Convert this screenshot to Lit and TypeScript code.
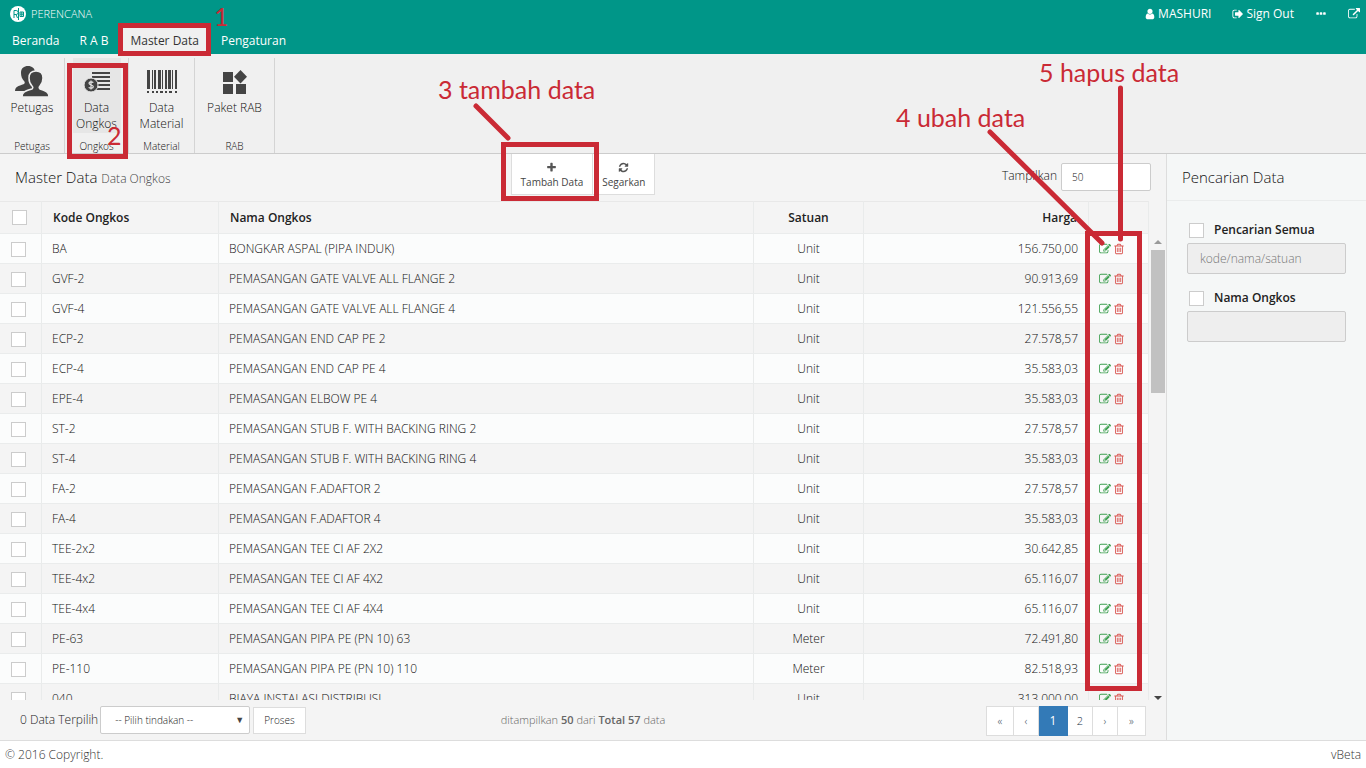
import { LitElement, html, css, svg } from "lit";
import { customElement } from "lit/decorators.js";

const FA: Record<string, string> = {
  trash: "M704 736v576q0 14-9 23t-23 9h-64q-14 0-23-9t-9-23v-576q0-14 9-23t23-9h64q14 0 23 9t9 23zm256 0v576q0 14-9 23t-23 9h-64q-14 0-23-9t-9-23v-576q0-14 9-23t23-9h64q14 0 23 9t9 23zm256 0v576q0 14-9 23t-23 9h-64q-14 0-23-9t-9-23v-576q0-14 9-23t23-9h64q14 0 23 9t9 23zm128 724v-948h-896v948q0 22 7 40.5t14.5 27 10.5 8.5h832q3 0 10.5-8.5t14.5-27 7-40.5zm-672-1076h448l-48-117q-7-9-17-11h-317q-10 2-17 11zm928 32v64q0 14-9 23t-23 9h-96v948q0 83-47 143.5t-113 60.5h-832q-66 0-113-58.5t-47-141.5v-952h-96q-14 0-23-9t-9-23v-64q0-14 9-23t23-9h309l70-167q15-37 54-63t79-26h320q40 0 79 26t54 63l70 167h309q14 0 23 9t9 23z",
  plus: "M1600 736v192q0 40-28 68t-68 28h-416v416q0 40-28 68t-68 28h-192q-40 0-68-28t-28-68v-416h-416q-40 0-68-28t-28-68v-192q0-40 28-68t68-28h416v-416q0-40 28-68t68-28h192q40 0 68 28t28 68v416h416q40 0 68 28t28 68z",
  refresh: "M1639 1056q0 5-1 7-64 268-268 434.5t-478 166.5q-146 0-282.5-55t-243.5-157l-129 129q-19 19-45 19t-45-19-19-45v-448q0-26 19-45t45-19h448q26 0 45 19t19 45-19 45l-137 137q71 66 161 102t187 36q134 0 250-65t186-179q11-17 53-117 8-23 30-23h192q13 0 22.5 9.5t9.5 22.5zm25-800v448q0 26-19 45t-45 19h-448q-26 0-45-19t-19-45 19-45l138-138q-148-137-349-137-134 0-250 65t-186 179q-11 17-53 117-8 23-30 23h-199q-13 0-22.5-9.5t-9.5-22.5v-7q65-268 270-434.5t480-166.5q146 0 284 55.5t245 156.5l130-129q19-19 45-19t45 19 19 45z",
  edit: "M888 1184l116-116-152-152-116 116v56h96v96h56zm440-720q-16-16-33 1l-350 350q-17 17-1 33t33-1l350-350q17-17 1-33zm80 594v190q0 119-84.5 203.5t-203.5 84.5h-832q-119 0-203.5-84.5t-84.5-203.5v-832q0-119 84.5-203.5t203.5-84.5h832q63 0 117 25 15 7 18 23 3 17-9 29l-49 49q-14 14-32 8-23-6-45-6h-832q-66 0-113 47t-47 113v832q0 66 47 113t113 47h832q66 0 113-47t47-113v-126q0-13 9-22l64-64q15-15 35-7t20 29zm-96-738l288 288-672 672h-288v-288zm444 132l-92 92-288-288 92-92q28-28 68-28t68 28l152 152q28 28 28 68t-28 68z",
  user: "M1536 1399q0 109-62.5 187t-150.5 78h-854q-88 0-150.5-78t-62.5-187q0-85 8.5-160.5t31.5-152 58.5-131 94-89 134.5-34.5q131 128 313 128t313-128q76 0 134.5 34.5t94 89 58.5 131 31.5 152 8.5 160.5zm-256-887q0 159-112.5 271.5t-271.5 112.5-271.5-112.5-112.5-271.5 112.5-271.5 271.5-112.5 271.5 112.5 112.5 271.5z",
  signout: "M704 1440q0 4 1 20t.5 26.5-3 23.5-10 19.5-20.5 6.5h-320q-119 0-203.5-84.5t-84.5-203.5v-704q0-119 84.5-203.5t203.5-84.5h320q13 0 22.5 9.5t9.5 22.5q0 4 1 20t.5 26.5-3 23.5-10 19.5-20.5 6.5h-320q-66 0-113 47t-47 113v704q0 66 47 113t113 47h312l11.5 1 11.5 3 8 5.5 7 9 2 13.5zm928-544q0 26-19 45l-544 544q-19 19-45 19t-45-19-19-45v-288h-448q-26 0-45-19t-19-45v-384q0-26 19-45t45-19h448v-288q0-26 19-45t45-19 45 19l544 544q19 19 19 45z",
  dots: "M576 736v192q0 40-28 68t-68 28h-192q-40 0-68-28t-28-68v-192q0-40 28-68t68-28h192q40 0 68 28t28 68zm512 0v192q0 40-28 68t-68 28h-192q-40 0-68-28t-28-68v-192q0-40 28-68t68-28h192q40 0 68 28t28 68zm512 0v192q0 40-28 68t-68 28h-192q-40 0-68-28t-28-68v-192q0-40 28-68t68-28h192q40 0 68 28t28 68z",
  external: "M1408 928v320q0 119-84.5 203.5t-203.5 84.5h-832q-119 0-203.5-84.5t-84.5-203.5v-832q0-119 84.5-203.5t203.5-84.5h704q14 0 23 9t9 23v64q0 14-9 23t-23 9h-704q-66 0-113 47t-47 113v832q0 66 47 113t113 47h832q66 0 113-47t47-113v-320q0-14 9-23t23-9h64q14 0 23 9t9 23zm384-864v512q0 26-19 45t-45 19-45-19l-176-176-652 652q-10 10-23 10t-23-10l-114-114q-10-10-10-23t10-23l652-652-176-176q-19-19-19-45t19-45 45-19h512q26 0 45 19t19 45z",
};
const fa = (n: string) => html`<svg class="fa" viewBox="0 0 1792 1792" aria-hidden="true"><path d=${FA[n]} /></svg>`;

const people = svg`
  <path d="M0 25c0-4 3-5 9-7 1-1 1-2 0-3-2-2-3-5-3-8 0-5 3-7 7-7s7 2 7 7c0 3-1 6-3 8v3l3 7z"/>
  <path stroke="#f0f0f0" stroke-width="1.500" d="M7 31c0-5 3-6 10-8 1-1 1-2 0-3-2-2-3-5-3-8 0-5 3-7 7-7s7 2 7 7c0 3-1 6-3 8-1 1-1 2 0 3 6 2 9 3 9 8z"/>`;
const money = svg`
  <path d="M8 0h18v2h-18zM8 4h18v2h-18zM10 8h16v2h-16zM12 12h14v2h-14zM10 16h16v2h-16z"/><circle cx="7" cy="13" r="7" stroke="#e6e6e6" stroke-width="1"/>
  <path d="M9.300 10.700c-1-1.300-4.300-1.200-4.300.6 0 2 4.300 1.400 4.300 3.400 0 1.800-3.300 1.900-4.600.6M7 8.500v9" fill="none" stroke="#e6e6e6" stroke-width="1.200"/>`;
const barcode = svg`
  <path d="M0 0h3v19h-3zM5 0h1v19h-1zM7 0h2v19h-2zM11 0h3v19h-3zM15 0h1v19h-1zM18 0h2v19h-2zM21 0h3v19h-3zM25 0h1v19h-1zM28 0h2v19h-2z"/>
  <path d="M0 21h2v2h-2zM5 21h2v2h-2zM9 21h2v2h-2zM13 21h3v2h-3zM18 21h2v2h-2zM22 21h3v2h-3zM28 21h2v2h-2z"/>`;
const blocks = svg`
  <path d="M0 1h10v10h-10zM0 13h10v10h-10zM13 13h10v10h-10z"/><path d="M17.500 -1l6.500 6.700-6.500 6.700-6.500-6.700z"/>`;

const RIBBON = [
  { label: ["Petugas"], group: "Petugas", w: 34, h: 32, vb: "0 0 34 32", icon: people, cls: "g1" },
  { label: ["Data", "Ongkos"], group: "Ongkos", w: 26, h: 22, vb: "0 -1 26 22", icon: money, cls: "g2" },
  { label: ["Data", "Material"], group: "Material", w: 30, h: 23, vb: "0 0 30 23", icon: barcode, cls: "g3" },
  { label: ["Paket RAB"], group: "RAB", w: 24, h: 25, vb: "0 -2 24 25", icon: blocks, cls: "g4" },
];

const ROWS: [string, string, string, string][] = [
  ["BA", "BONGKAR ASPAL (PIPA INDUK)", "Unit", "156.750,00"],
  ["GVF-2", "PEMASANGAN GATE VALVE ALL FLANGE 2", "Unit", "90.913,69"],
  ["GVF-4", "PEMASANGAN GATE VALVE ALL FLANGE 4", "Unit", "121.556,55"],
  ["ECP-2", "PEMASANGAN END CAP PE 2", "Unit", "27.578,57"],
  ["ECP-4", "PEMASANGAN END CAP PE 4", "Unit", "35.583,03"],
  ["EPE-4", "PEMASANGAN ELBOW PE 4", "Unit", "35.583,03"],
  ["ST-2", "PEMASANGAN STUB F. WITH BACKING RING 2", "Unit", "27.578,57"],
  ["ST-4", "PEMASANGAN STUB F. WITH BACKING RING 4", "Unit", "35.583,03"],
  ["FA-2", "PEMASANGAN F.ADAFTOR 2", "Unit", "27.578,57"],
  ["FA-4", "PEMASANGAN F.ADAFTOR 4", "Unit", "35.583,03"],
  ["TEE-2x2", "PEMASANGAN TEE CI AF 2X2", "Unit", "30.642,85"],
  ["TEE-4x2", "PEMASANGAN TEE CI AF 4X2", "Unit", "65.116,07"],
  ["TEE-4x4", "PEMASANGAN TEE CI AF 4X4", "Unit", "65.116,07"],
  ["PE-63", "PEMASANGAN PIPA PE (PN 10) 63", "Meter", "72.491,80"],
  ["PE-110", "PEMASANGAN PIPA PE (PN 10) 110", "Meter", "82.518,93"],
  ["040", "BIAYA INSTALASI DISTRIBUSI", "Unit", "313.000,00"],
];

@customElement("app-root")
export class AppRoot extends LitElement {
  static styles = css`
    :host { display: block; position: relative; font: 300 12px/18px "Open Sans", "Noto Sans", sans-serif; color: #111; }
    * { box-sizing: border-box; }
    button, input, select { font: inherit; color: inherit; margin: 0; }
    a { color: inherit; text-decoration: none; }
    .page { display: flex; flex-direction: column; height: 100vh; overflow: hidden; background: #fff; }
    .fa { width: 12px; height: 12px; fill: currentColor; flex: none; }

    header { flex: none; height: 54px; background: #009688; color: #fff; display: flex; flex-direction: column; font-weight: 400; }
    .top { display: flex; align-items: center; height: 28px; padding: 0 6px 0 10px; gap: 5px; font-size: 11px; }
    .logo { width: 16px; height: 16px; flex: none; }
    .brand { flex: 1; font-weight: 300; }
    .tools { display: flex; align-items: center; gap: 21px; font-size: 12px; }
    .tools a { display: flex; align-items: center; gap: 2px; }
    nav { display: flex; height: 26px; padding-left: 2px; }
    nav a { display: flex; align-items: center; justify-content: center; padding: 0 10px; }
    nav a.on { background: #f0f0f0; color: #333; padding: 0 12px; }

    .ribbon { flex: none; display: flex; height: 100px; background: #f0f0f0; border-bottom: 1px solid #ccc; padding-top: 4px; }
    .group { display: flex; flex-direction: column; align-items: center; justify-content: space-between; border-right: 1px solid #d4d4d4; height: 95px; }
    .g1 { width: 65px; } .g2 { width: 64px; } .g3 { width: 66px; } .g4 { width: 80px; }
    .group button { border: 0; background: none; padding: 0; display: flex; flex-direction: column; align-items: center; line-height: 16px; width: 48px; height: 75px; white-space: nowrap; }
    .group.g2 button { background: #e6e6e6; }
    .pic { height: 42px; padding-top: 5px; display: flex; align-items: center; justify-content: center; }
    .pic svg { fill: #444; }
    .caption { font-size: 10px; line-height: 13px; }

    .work { flex: 1; display: flex; min-height: 0; background: #f4f4f4; }
    .main { flex: 1; display: flex; flex-direction: column; min-width: 0; }
    .bar { flex: none; height: 47px; display: grid; grid-template-columns: 1fr auto 1fr; padding: 0 15px; }
    h1, h2 { margin: 0; font-weight: 300; font-size: 15px; line-height: 20px; }
    .bar h1 { padding-top: 13px; }
    small { font-size: 12px; color: #444; }
    .actions { display: flex; height: 41px; }
    .actions button { display: flex; flex-direction: column; align-items: center; justify-content: center; gap: 2px; border: 1px solid #ddd; border-top: 0; background: #fff; font-size: 10px; line-height: 14px; padding: 2px 9px 0; font-weight: 400; color: #444; }
    .actions .fa { width: 11px; height: 11px; fill: #555; }
    .actions button + button { border-left: 0; }
    .show { display: flex; align-items: flex-start; justify-content: flex-end; gap: 4px; padding-top: 9px; line-height: 26px; }
    .show input { width: 90px; height: 28px; border: 1px solid #ccc; background: #fff; padding: 0 10px; font-size: 10px; border-radius: 2px; }

    .grid { flex: 1; min-height: 0; display: flex; }
    .rows { flex: 1; overflow: hidden; min-width: 0; }
    table { width: 100%; table-layout: fixed; border-collapse: separate; border-spacing: 0; }
    th, td { padding: 0 10px; text-align: left; border-right: 1px solid #e9ebeb; border-bottom: 1px solid #eaecec; overflow: hidden; white-space: nowrap; }
    th { height: 33px; border-top: 1px solid #e8e8e8; font-weight: 600; background: #f4f4f4; color: #222; padding: 0 11px; }
    td { height: 30px; background: #fbfcfc; }
    tr:nth-child(even) td { background: #f4f4f4; }
    th.c, td.c { text-align: center; }
    th.r, td.r { text-align: right; }
    .tick { width: 42px; } .code { width: 177px; } .unit { width: 110px; } .price { width: 225px; } .act { width: 60px; }
    input[type="checkbox"] { appearance: none; display: block; width: 15px; height: 15px; background: #fff; border: 1px solid #ccc; }
    td:first-child { padding: 1px 11px 0; }
    th:first-child { padding: 0 12px; }
    .acts { display: flex; gap: 2px; }
    .acts button { border: 0; padding: 0; background: none; display: flex; }
    .acts .e { color: #3c9f4f; } .acts .d { color: #d9534f; }
    .scroll { flex: none; width: 17px; padding-top: 33px; display: flex; flex-direction: column; align-items: center; }
    .arrow { border: 4px solid transparent; width: 0; height: 0; }
    .up { border-bottom-color: #999; border-top: 0; margin: 6px 0; }
    .down { border-top-color: #444; border-bottom: 0; }
    .track { flex: 1; width: 14px; }
    .thumb { width: 14px; height: 32%; background: #c1c1c1; }

    .foot { flex: none; height: 40px; display: grid; grid-template-columns: 1fr auto 1fr; padding: 0 20px; align-items: center; color: #666; font-size: 11px; }
    .foot b { font-weight: 600; }
    .left { display: flex; align-items: center; gap: 2px; color: #222; font-size: 12px; }
    .left select { width: 150px; height: 28px; border: 1px solid #ccc; background: #fff; font-size: 10px; padding: 0 14px; border-radius: 2px; appearance: none; }
    .sel { display: flex; align-items: center; }
    .sel::after { content: "▼"; font-size: 9px; color: #444; margin-left: -15px; margin-right: 7px; pointer-events: none; }
    .left button { height: 27px; border: 1px solid #ddd; background: #fff; font-size: 10px; padding: 0 10px; }
    .pager { display: flex; justify-content: flex-end; padding-top: 2px; }
    .pager a { height: 30px; display: flex; align-items: center; justify-content: center; border: 1px solid #ddd; border-left: 0; background: #fff; color: #234; width: 25px; font-size: 11px; }
    .pager a:first-child { border-left: 1px solid #ddd; width: 28px; } .pager a:last-child { width: 28px; }
    .pager a.on { background: #337ab7; border-color: #337ab7; color: #fff; font-size: 12px; font-weight: 400; width: 29px; }

    aside { flex: none; width: 200px; border-left: 1px solid #ddd; background: #f5f7f7; }
    aside h2 { height: 47px; padding: 13px 15px 0; border-bottom: 1px solid #eaecec; }
    form { padding: 19px 20px; display: flex; flex-direction: column; gap: 3px; }
    form label { display: flex; align-items: center; gap: 10px; font-weight: 600; color: #222; height: 20px; padding-left: 2px; }
    form input.t { height: 31px; width: 100%; border: 1px solid #ccc; background: #eee; padding: 0 12px; border-radius: 2px; margin-bottom: 11px; }
    .t::placeholder { color: #777; opacity: 1; }
    .copy { flex: none; height: 28px; border-top: 1px solid #ddd; display: flex; justify-content: space-between; align-items: center; padding: 0 5px; color: #333; }

    .marks { position: absolute; left: 0; top: 0; width: 1366px; height: 768px; pointer-events: none; }
    .marks text { font: 25px Lato, sans-serif; fill: #ca2a35; }
  `;

  render() {
    return html`
      <div class="page">
        <header>
          <div class="top">
            <svg class="logo" viewBox="0 0 16 16"><circle cx="8" cy="8" r="8" fill="#fff"/><path d="M4 12V4.500h2.200a2 2 0 0 1 0 4H4M6 8.500l1.500 3.500M8.500 2v12M10 6h3.500v4.500h-3.500zM10 8.200h3.500M11.800 6v4" fill="none" stroke="#009688" stroke-width="1"/></svg>
            <span class="brand">PERENCANA</span>
            <div class="tools">
              <a href="#">${fa("user")}MASHURI</a><a href="#">${fa("signout")}Sign Out</a>
              <a href="#" aria-label="Lainnya">${fa("dots")}</a><a href="#" aria-label="Buka">${fa("external")}</a>
            </div>
          </div>
          <nav><a href="#">Beranda</a><a href="#">R A B</a><a href="#" class="on">Master Data</a><a href="#">Pengaturan</a></nav>
        </header>
        <div class="ribbon">
          ${RIBBON.map((g) => html`<div class="group ${g.cls}">
            <button type="button"><span class="pic"><svg width=${g.w} height=${g.h} viewBox=${g.vb}>${g.icon}</svg></span>${g.label.map((l) => html`<span>${l}</span>`)}</button>
            <span class="caption">${g.group}</span></div>`)}
        </div>
        <div class="work">
          <div class="main">
            <div class="bar">
              <h1>Master Data <small>Data Ongkos</small></h1>
              <div class="actions"><button type="button">${fa("plus")}Tambah Data</button><button type="button">${fa("refresh")}Segarkan</button></div>
              <div class="show"><label for="n">Tampilkan</label><input id="n" value="50" /></div>
            </div>
            <div class="grid">
              <div class="rows">
                <table>
                  <thead><tr>
                    <th class="tick"><input type="checkbox" aria-label="Pilih semua" /></th><th class="code">Kode Ongkos</th><th>Nama Ongkos</th>
                    <th class="unit c">Satuan</th><th class="price r">Harga</th><th class="act"></th>
                  </tr></thead>
                  <tbody>${ROWS.map((r) => html`<tr>
                    <td><input type="checkbox" aria-label=${r[0]} /></td><td>${r[0]}</td><td>${r[1]}</td><td class="c">${r[2]}</td><td class="r">${r[3]}</td>
                    <td><div class="acts"><button class="e" type="button" aria-label="Ubah">${fa("edit")}</button><button class="d" type="button" aria-label="Hapus">${fa("trash")}</button></div></td>
                  </tr>`)}</tbody>
                </table>
              </div>
              <div class="scroll"><span class="arrow up"></span><div class="track"><div class="thumb"></div></div><span class="arrow down"></span></div>
            </div>
            <div class="foot">
              <div class="left"><label for="act">0 Data Terpilih</label><span class="sel"><select id="act"><option>-- Pilih tindakan --</option></select></span><button type="button">Proses</button></div>
              <div>ditampilkan <b>50</b> dari <b>Total 57</b> data</div>
              <div class="pager"><a href="#">«</a><a href="#">‹</a><a href="#" class="on">1</a><a href="#">2</a><a href="#">›</a><a href="#">»</a></div>
            </div>
          </div>
          <aside>
            <h2>Pencarian Data</h2>
            <form>
              <label><input type="checkbox" />Pencarian Semua</label><input class="t" disabled aria-label="Pencarian Semua" placeholder="kode/nama/satuan" />
              <label><input type="checkbox" />Nama Ongkos</label><input class="t" disabled aria-label="Nama Ongkos" />
            </form>
          </aside>
        </div>
        <div class="copy"><span>© 2016 Copyright.</span><span>vBeta</span></div>
      </div>
      <svg class="marks" viewBox="0 0 1366 768">
        <g fill="none" stroke="#ca2a35" stroke-width="5">
          <rect x="120.500" y="25.500" width="88" height="28"/><rect x="69.500" y="65.500" width="56" height="91"/>
          <rect x="503.500" y="144.500" width="93" height="54"/><rect x="1087.500" y="233.500" width="52" height="455"/>
          <path d="M476 106L508 138M990 132L1102 243M1120.500 88V239" stroke-linecap="round"/>
        </g>
        <text x="214" y="26">1</text><text x="107" y="145">2</text><text x="438" y="99">3 tambah data</text>
        <text x="896" y="127">4 ubah data</text><text x="1039" y="82">5 hapus data</text>
      </svg>`;
  }
}
